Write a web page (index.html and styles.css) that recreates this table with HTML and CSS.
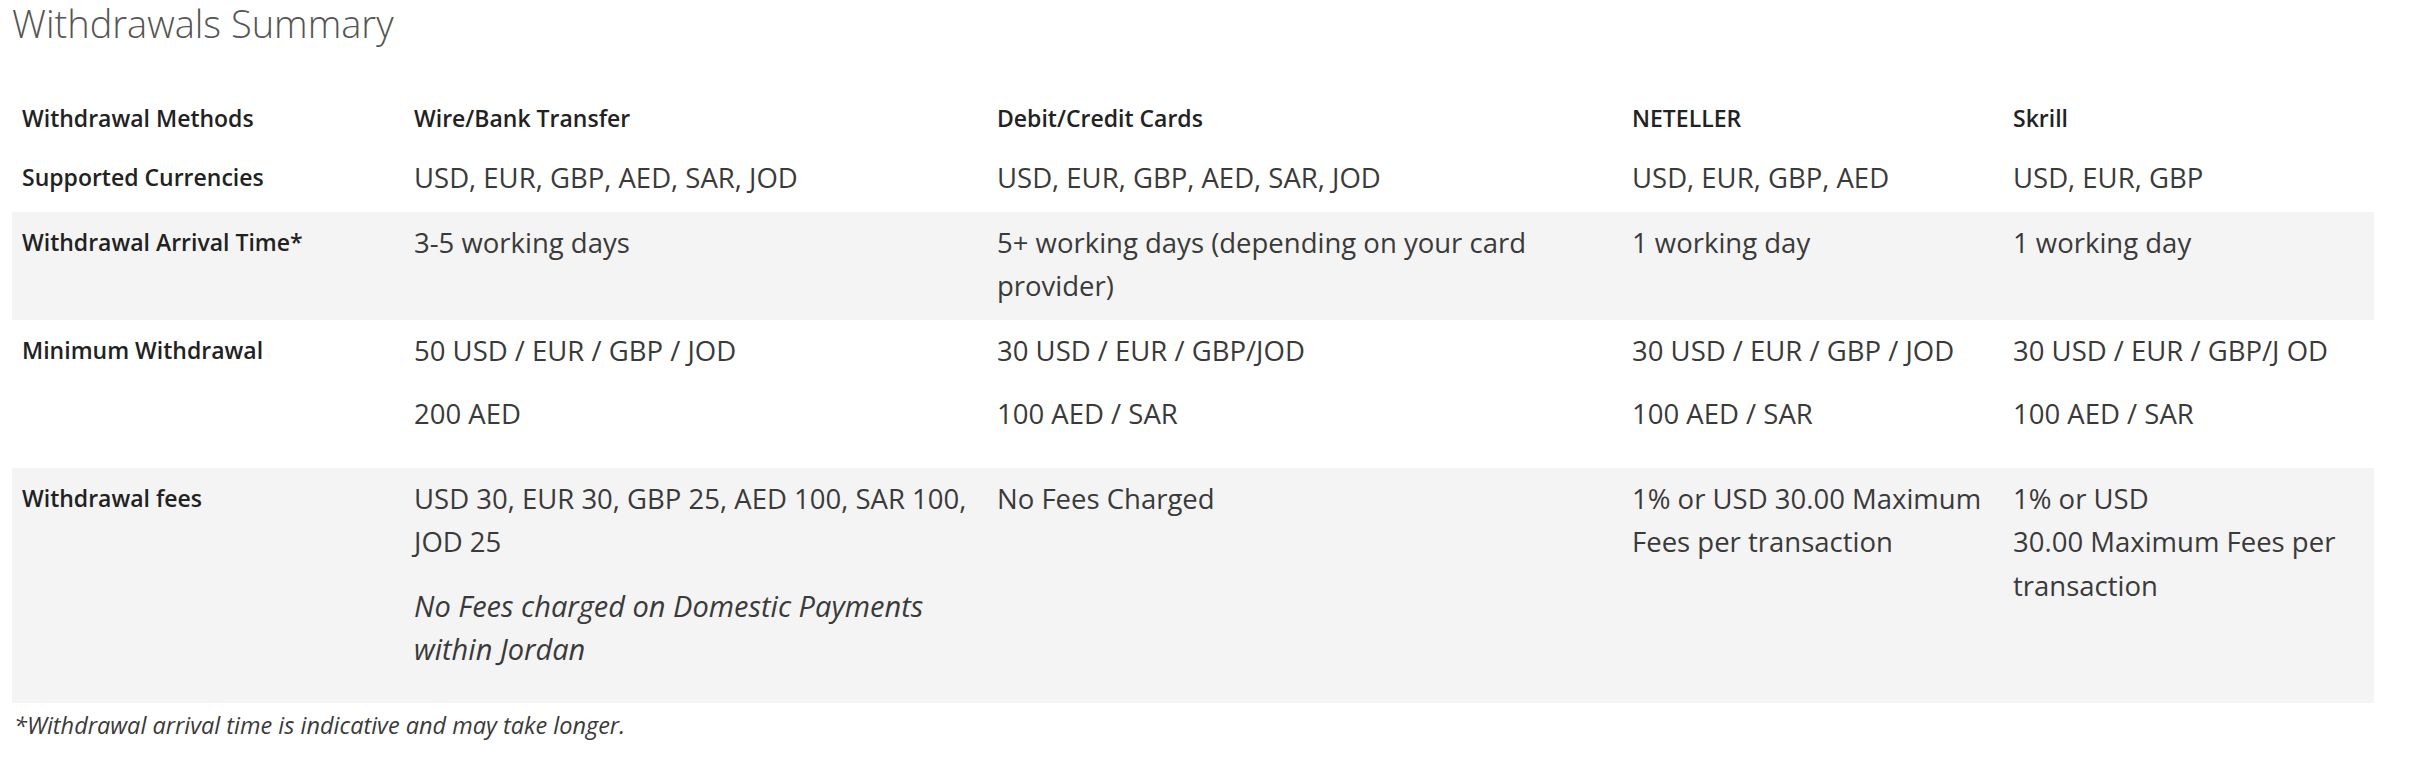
FILE: index.html
```html
<!DOCTYPE html>
<html lang="en">
<head>
<meta charset="utf-8">
<title>Withdrawals Summary</title>
<link rel="stylesheet" href="styles.css">
</head>
<body>
<div class="page">
  <h2 class="title">Withdrawals Summary</h2>
  <table class="summary">
    <colgroup>
      <col class="c1"><col class="c2"><col class="c3"><col class="c4"><col class="c5">
    </colgroup>
    <tbody>
      <tr class="row-head">
        <th>Withdrawal Methods</th>
        <th>Wire/Bank Transfer</th>
        <th>Debit/Credit Cards</th>
        <th>NETELLER</th>
        <th>Skrill</th>
      </tr>
      <tr>
        <th>Supported Currencies</th>
        <td>USD, EUR, GBP, AED, SAR, JOD</td>
        <td>USD, EUR, GBP, AED, SAR, JOD</td>
        <td>USD, EUR, GBP, AED</td>
        <td>USD, EUR, GBP</td>
      </tr>
      <tr class="shade">
        <th>Withdrawal Arrival Time*</th>
        <td>3-5 working days</td>
        <td>5+ working days (depending on your card provider)</td>
        <td>1 working day</td>
        <td>1 working day</td>
      </tr>
      <tr>
        <th>Minimum Withdrawal</th>
        <td><p>50 USD / EUR / GBP / JOD</p><p>200 AED</p></td>
        <td><p>30 USD / EUR / GBP/JOD</p><p>100 AED / SAR</p></td>
        <td><p>30 USD / EUR / GBP / JOD</p><p>100 AED / SAR</p></td>
        <td><p>30 USD / EUR / GBP/J OD</p><p>100 AED / SAR</p></td>
      </tr>
      <tr class="shade">
        <th>Withdrawal fees</th>
        <td><p>USD 30, EUR 30, GBP 25, AED 100, SAR 100, JOD 25</p><p class="italic">No Fees charged on Domestic Payments within Jordan</p></td>
        <td><p>No Fees Charged</p></td>
        <td><p>1% or USD 30.00 Maximum Fees per transaction</p></td>
        <td><p>1% or USD<br>30.00 Maximum Fees per transaction</p></td>
      </tr>
    </tbody>
  </table>
  <p class="note">*Withdrawal arrival time is indicative and may take longer.</p>
</div>
</body>
</html>
```
FILE: styles.css
```css
html, body {
  margin: 0;
  padding: 0;
  background: #ffffff;
}

.page {
  padding: 0 46px 0 12px;
  font-family: "Open Sans", "Liberation Sans", sans-serif;
  color: #333333;
}

.title {
  margin: 0;
  font-size: 38px;
  font-weight: 300;
  line-height: 46px;
  color: #555555;
  height: 88px;
}

.summary {
  width: 2362px;
  border-collapse: collapse;
  table-layout: fixed;
}

.c1 { width: 392px; }
.c2 { width: 583px; }
.c3 { width: 635px; }
.c4 { width: 381px; }
.c5 { width: 371px; }

.summary th,
.summary td {
  text-align: left;
  vertical-align: top;
  padding: 9px 10px 12px;
  font-size: 27.5px;
  line-height: 43.5px;
}

.summary th {
  font-weight: 600;
  font-size: 23px;
  color: #222222;
}

.row-head th {
  line-height: 37px;
  padding-top: 12px;
  padding-bottom: 10px;
}

.summary td {
  font-weight: 400;
  color: #3a3a3a;
}

.summary p {
  margin: 0 0 20px;
}

.summary p.italic {
  font-size: 29px;
  font-style: italic;
}

.shade th,
.shade td {
  background: #f4f4f4;
}

.note {
  margin: 6px 0 0 2px;
  font-size: 23.5px;
  font-style: italic;
  line-height: 32px;
  color: #3a3a3a;
}
```
